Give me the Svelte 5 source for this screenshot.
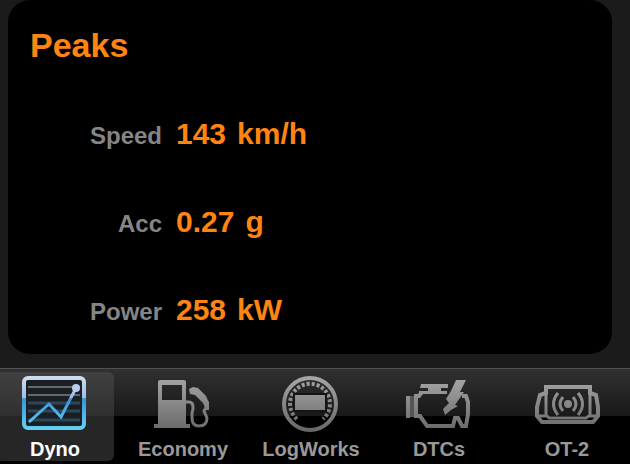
<script>
  let active = "Dyno";

  const peaks = [
    { label: "Speed", value: "143", unit: "km/h" },
    { label: "Acc", value: "0.27", unit: "g" },
    { label: "Power", value: "258", unit: "kW" },
  ];

  const tabs = ["Dyno", "Economy", "LogWorks", "DTCs", "OT-2"];
</script>

<div class="app">
  <main class="card">
    <h1>Peaks</h1>
    <dl>
      {#each peaks as peak}
        <div class="row">
          <dt>{peak.label}</dt>
          <dd><span>{peak.value}</span> <span>{peak.unit}</span></dd>
        </div>
      {/each}
    </dl>
  </main>

  <nav>
    {#each tabs as tab}
      <button
        type="button"
        class:active={active === tab}
        aria-current={active === tab ? "page" : undefined}
        on:click={() => (active = tab)}
      >
        <svg viewBox="0 0 68 60" aria-hidden="true">
          {#if tab === "Dyno"}
            <defs>
              <linearGradient id="blue" gradientUnits="userSpaceOnUse" x1="0" y1="2" x2="0" y2="56">
                <stop offset="0" stop-color="#d3def0" />
                <stop offset="0.4" stop-color="#9dbde6" />
                <stop offset="0.42" stop-color="#3795dc" />
                <stop offset="1" stop-color="#66d2f5" />
              </linearGradient>
            </defs>
            <rect x="3" y="4" width="60" height="50" rx="2" fill="#1c1f22" />
            <path d="M7 13H59M7 21H59" stroke="#626870" stroke-width="2" />
            <path d="M7 29H59M7 37H59M7 46H59" stroke="#2c465c" stroke-width="3" />
            <rect x="3" y="4" width="60" height="50" rx="4" fill="none" stroke="url(#blue)" stroke-width="4" />
            <path d="M8 48 28 30 40 43 55 14" fill="none" stroke="url(#blue)" stroke-width="3" />
            <circle cx="55" cy="14" r="4" fill="#b7cdf0" />
          {:else}
            <defs>
              <linearGradient id="grey-{tab}" gradientUnits="userSpaceOnUse" x1="0" y1="4" x2="0" y2="58">
                <stop offset="0" stop-color="#a5a5a5" />
                <stop offset="1" stop-color="#676767" />
              </linearGradient>
            </defs>
            <g fill="none" stroke="url(#grey-{tab})" stroke-width="4">
              {#if tab === "Economy"}
                <path d="M9 8q0-2 2-2H35q2 0 2 2V50H41V54H5V50H9ZM13 11V26H33V11Z" fill="url(#grey-{tab})" stroke="none" fill-rule="evenodd" />
                <path d="M37 28h3q4 0 4 5v2l-1 4v5q0 8 7 8 8 0 8-8l-3-7 3-5v-5" stroke-width="3" />
                <path d="M40 15 44 13 49 14 57 22 60 29V36L57 36 54 29 46 21 41 20Z" fill="url(#grey-{tab})" stroke="none" />
              {:else if tab === "LogWorks"}
                <circle cx="33" cy="30" r="26" />
                <path d="M20 45A20 20 0 1 1 46 45" stroke-width="4" stroke-dasharray="3 2" />
                <rect x="16" y="19" width="34" height="19" fill="#141414" stroke="none" />
                <rect x="18" y="21" width="30" height="15" fill="url(#grey-{tab})" stroke="none" />
              {:else if tab === "DTCs"}
                <path d="M16 10H43V14H36V17H42V20H14V17H23V14H15Z" fill="url(#grey-{tab})" stroke="none" />
                <rect x="1" y="22" width="11" height="21" fill="#555" stroke="none" />
                <path d="M3 22V44M11 22V44" />
                <path d="M17 18 14 22H11V42H15L22 52H48L50 44H53L57 52H61L63 40V28L61 22H57" />
                <path d="M51 6H61L55 18H59L50 31 53 32 46 36 40 41 38 35 44 29 41 25 46 17Z" fill="url(#grey-{tab})" stroke="none" />
              {:else}
                <path d="M13 13H57V19L63 21 65 33V42L60 48H9L4 42V33L7 21 13 19Z" />
                <path d="M13 20V42M57 20V42M5 42H14L16 44H53L56 42H64" stroke-width="3" />
                <circle cx="35" cy="30" r="4" fill="url(#grey-{tab})" stroke="none" />
                <path d="M30 23Q24 30 30 37M40 23Q46 30 40 37M25 19Q16 30 25 41M45 19Q54 30 45 41" stroke-width="3" />
              {/if}
            </g>
          {/if}
        </svg>
        {tab}
      </button>
    {/each}
  </nav>
</div>

<style>
  :global(body) {
    margin: 0;
    background: #1b1b1b;
  }
  .app {
    min-height: 100vh;
    display: flex;
    flex-direction: column;
    overflow: hidden;
    font-family: "Liberation Sans", Arial, sans-serif;
    font-weight: bold;
  }
  .card {
    margin: 0 18px 14px 8px;
    padding: 0 22px;
    border-radius: 22px;
    background: #000;
    color: #ff8412;
  }
  h1 {
    margin: 0;
    font-size: 34px;
    line-height: 90px;
  }
  dl {
    margin: 0;
  }
  .row {
    display: grid;
    grid-template-columns: 132px 1fr;
    gap: 14px;
    align-items: baseline;
  }
  dt {
    color: #858585;
    font-size: 24px;
    line-height: 60px;
    text-align: right;
  }
  dd {
    display: flex;
    gap: 11px;
    margin: 0;
    font-size: 30px;
    line-height: 88px;
  }

  /* the bar runs slightly past both edges of the window */
  nav {
    display: grid;
    grid-template-columns: repeat(5, 1fr);
    margin: 0 -1px 0 -9px;
    padding: 3px 0;
    border-top: 1px solid #505050;
    background: linear-gradient(#303030, #191919 47px, #000 47px);
  }
  button {
    display: flex;
    flex-direction: column;
    align-items: center;
    gap: 3px;
    margin: 0 5px;
    padding: 2px 0 0;
    border: 0;
    border-radius: 6px;
    background: none;
    color: #999;
    font: inherit;
    font-size: 20px;
    line-height: 24px;
    cursor: pointer;
  }
  button.active {
    background: linear-gradient(#404040, #303030 44px, #262626 44px);
    color: #fff;
  }
  svg {
    width: 68px;
    height: 60px;
  }
</style>
